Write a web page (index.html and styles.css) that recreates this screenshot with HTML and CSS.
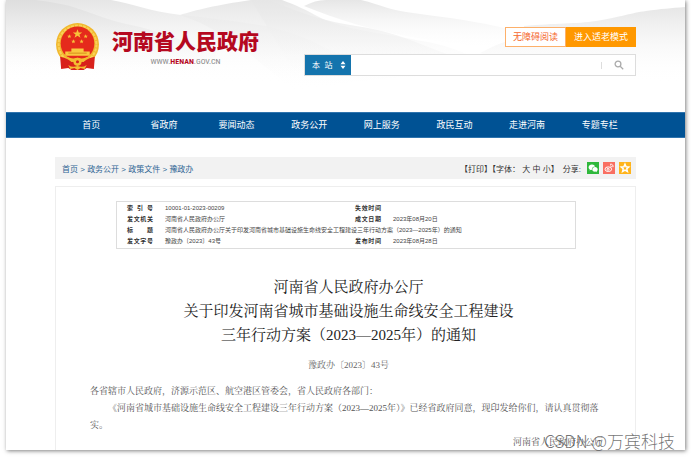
FILE: index.html
```html
<!DOCTYPE html>
<html lang="zh-CN">
<head>
    <meta charset="UTF-8">
    <meta name="viewport" content="width=device-width, initial-scale=1.0">
    <title>河南省人民政府</title>
    <link rel="stylesheet" href="styles.css">
</head>
<body>
    <div class="page">
        <header class="header">
            <svg class="hills" viewBox="0 0 679 112" preserveAspectRatio="none" aria-hidden="true">
                <defs>
                    <linearGradient id="g1" x1="0" y1="0" x2="0" y2="1">
                        <stop offset="0" stop-color="#dedede"/>
                        <stop offset="1" stop-color="#ffffff" stop-opacity="0"/>
                    </linearGradient>
                    <linearGradient id="g2" x1="0" y1="0" x2="0" y2="1">
                        <stop offset="0" stop-color="#e6e6e6"/>
                        <stop offset="1" stop-color="#ffffff" stop-opacity="0"/>
                    </linearGradient>
                </defs>
                <path fill="url(#g2)" d="M245 0H276C290 5 300 10 315 18C340 30 370 32 410 40C450 46 470 58 500 74H290Z"/>
                <path fill="url(#g2)" d="M298 6C306 2 312 0 320 0H355C375 5 385 10 400 12C430 17 460 18 515 32V50C440 44 370 36 298 6Z"/>
                <path fill="url(#g2)" d="M518 26C550 23 570 24 590 21C615 17 625 13 640 11C655 9 665 8 679 7V84C620 78 530 70 474 53C490 45 500 40 518 38Z"/>
                <path fill="url(#g2)" d="M174 15C190 10 210 5 245 0H262C290 10 310 20 350 26C380 30 400 38 430 50C460 62 480 66 520 74C430 72 340 80 290 92C250 60 220 30 174 15Z"/>
                <path fill="url(#g2)" d="M0 0H105C125 3 145 12 175 15C205 18 235 22 260 26C300 36 320 46 360 72C320 84 200 84 0 84Z"/>
                <path fill="url(#g1)" d="M0 0H29C45 2 60 4 73 9C90 14 100 20 125 25C150 30 170 40 210 50V76H0Z"/>
            </svg>
            <a class="logo" href="#">
                <svg class="emblem" viewBox="0 0 44 46" aria-hidden="true">
                    <circle cx="22" cy="21" r="21" fill="#f1b82d"/>
                    <circle cx="22" cy="21" r="18.5" fill="none" stroke="#f9d158" stroke-width="2" stroke-dasharray="3 1"/>
                    <circle cx="22" cy="20" r="16.500" fill="#e52a1c"/>
                    <path fill="#f8c33a" d="M22 6L23.200 9.300H26.600L23.900 11.300L24.900 14.500L22 12.500L19.100 14.500L20.100 11.300L17.400 9.300H20.800Z"/>
                    <path fill="#f8c33a" d="M14 11l.6 1.400h1.500l-1.200 1 .4 1.500-1.300-.9-1.300.9.4-1.500-1.200-1h1.500ZM30 11l.6 1.400h1.500l-1.200 1 .4 1.500-1.300-.9-1.300.9.4-1.500-1.200-1h1.500ZM18 16l.6 1.400h1.500l-1.200 1 .4 1.500-1.300-.9-1.300.9.4-1.500-1.200-1h1.500ZM26 16l.6 1.400h1.500l-1.200 1 .4 1.500-1.300-.9-1.300.9.4-1.500-1.200-1h1.500Z"/>
                    <path fill="#f9c93f" d="M16 25H28V28H34V32H10V28H16Z"/>
                    <path stroke="#d9901e" d="M13 29.500H31" fill="none"/>
                    <path fill="#d8211b" d="M5 33C9 34 13 35 16 38H28C31 35 35 34 39 33L38 45L31 44L28 46H16L13 44L6 45Z"/>
                    <path fill="#f4bd31" d="M12 33C16 35 18 35 22 34C26 35 28 35 32 33L28 38H16Z"/>
                    <circle cx="22" cy="38" r="4" fill="#f4bd31"/>
                    <circle cx="22" cy="38" r="1.500" fill="#d8211b"/>
                    <path fill="#f4bd31" d="M13 41Q17 44 22 42Q27 44 31 41L29 45L25 44L22 46L19 44L15 45Z"/>
                </svg>
                <span class="logo-text">
                    <strong class="logo-name">河南省人民政府</strong>
                    <span class="logo-url">WWW.<b>HENAN</b>.GOV.CN</span>
                </span>
            </a>
            <div class="tools">
                <div class="modes">
                    <button class="mode" type="button">无障碍阅读</button>
                    <button class="mode mode-on" type="button">进入适老模式</button>
                </div>
                <form class="search">
                    <span class="scope">
                        <select class="scope-select" aria-label="搜索范围">
                            <option>本&nbsp; 站</option>
                        </select>
                        <svg class="scope-arrows" viewBox="0 0 6 8" aria-hidden="true"><path fill="#fff" d="M3 0L5.500 3.300H.5ZM3 8L.5 4.700H5.500Z"/></svg>
                    </span>
                    <input class="search-input" type="text" aria-label="搜索">
                    <button class="search-btn" type="submit" aria-label="搜索">
                        <svg viewBox="0 0 10 10" aria-hidden="true"><circle cx="4" cy="4" r="2.900"/><path d="M6.200 6.200L9.200 9.200"/></svg>
                    </button>
                </form>
            </div>
        </header>

        <nav class="nav">
            <a href="#">首页</a>
            <a href="#">省政府</a>
            <a href="#">要闻动态</a>
            <a href="#">政务公开</a>
            <a href="#">网上服务</a>
            <a href="#">政民互动</a>
            <a href="#">走进河南</a>
            <a href="#">专题专栏</a>
        </nav>

        <main class="main">
            <div class="bar">
                <div class="crumbs">
                    <a href="#">首页</a> &gt; <a href="#">政务公开</a> &gt; <a href="#">政策文件</a> &gt; <a href="#">豫政办</a>
                </div>
                <div class="actions">
                    <span>【<a href="#">打印</a>】【字体： <a href="#">大</a> <a href="#">中</a> <a href="#">小</a>】</span>
                    <span class="share-label">分享:</span>
                    <a class="share wechat" href="#" aria-label="微信">
                        <svg viewBox="0 0 12 12" aria-hidden="true"><path fill="#fff" d="M5 2.500C3 2.500 1.600 3.700 1.600 5.200c0 .9.500 1.600 1.200 2.100L2.500 8.500l1.400-.7 1 .2C4.600 6 6 4.600 8.100 4.500 7.700 3.300 6.500 2.500 5 2.500Z"/><path fill="#fff" d="M10.700 7.400c0-1.300-1.200-2.300-2.700-2.300S5.300 6.100 5.300 7.400 6.500 9.700 8 9.700l.8-.1 1.200.7-.3-1c.6-.5 1-1.100 1-1.900Z"/></svg>
                    </a>
                    <a class="share weibo" href="#" aria-label="微博">
                        <svg viewBox="0 0 12 12" aria-hidden="true"><ellipse cx="5.300" cy="7.200" rx="3.300" ry="2.300"/><circle cx="5.100" cy="7.300" r="1"/><path d="M7 2.300C9 1.700 10.600 3.300 9.900 5.200M7.200 4C8.200 3.800 8.700 4.400 8.400 5.200"/></svg>
                    </a>
                    <a class="share qzone" href="#" aria-label="收藏">
                        <svg viewBox="0 0 12 12" aria-hidden="true"><path d="M6 2.200L7.100 4.700L9.800 5L7.800 6.800L8.400 9.500L6 8.100L3.600 9.500L4.200 6.800L2.200 5L4.900 4.700Z"/></svg>
                    </a>
                </div>
            </div>

            <article class="doc">
                <table class="info">
                    <tr>
                        <th scope="row">索 引 号</th>
                        <td>10001-01-2023-00209</td>
                        <th scope="row">失效时间</th>
                        <td></td>
                    </tr>
                    <tr>
                        <th scope="row">发文机关</th>
                        <td>河南省人民政府办公厅</td>
                        <th scope="row">成文日期</th>
                        <td>2023年08月20日</td>
                    </tr>
                    <tr>
                        <th scope="row">标 题</th>
                        <td colspan="3">河南省人民政府办公厅关于印发河南省城市基础设施生命线安全工程建设三年行动方案（2023—2025年）的通知</td>
                    </tr>
                    <tr>
                        <th scope="row">发文字号</th>
                        <td>豫政办〔2023〕43号</td>
                        <th scope="row">发布时间</th>
                        <td>2023年08月28日</td>
                    </tr>
                </table>
                <h1 class="title">河南省人民政府办公厅<br>关于印发河南省城市基础设施生命线安全工程建设<br>三年行动方案（2023—2025年）的通知</h1>
                <p class="number">豫政办〔2023〕43号</p>
                <div class="text">
                    <p>各省辖市人民政府，济源示范区、航空港区管委会，省人民政府各部门：</p>
                    <p class="indent">《河南省城市基础设施生命线安全工程建设三年行动方案（2023—2025年）》已经省政府同意，现印发给你们，请认真贯彻落实。</p>
                    <p class="sign">河南省人民政府办公厅</p>
                </div>
            </article>
        </main>
        <div class="watermark">CSDN @万宾科技</div>
    </div>
</body>
</html>
```
FILE: styles.css
```css
* {
    box-sizing: border-box;
}
body {
    margin: 0;
    padding: 0 6px 10px;
    background: #fff;
    color: #333;
    font-family: "Liberation Sans", "Noto Sans CJK SC", sans-serif;
    font-size: 8px;
}
a {
    color: inherit;
    text-decoration: none;
}
button, input, select {
    margin: 0;
    border: 0;
    border-radius: 0;
    font-family: inherit;
}
.page {
    position: relative;
    background: #fff;
    box-shadow: 1px 1px 4px rgba(0, 0, 0, 0.5);
}

/* header */
.header {
    position: relative;
    display: flex;
    justify-content: space-between;
    height: 112px;
    padding: 0 49px;
}
.hills {
    position: absolute;
    top: 0;
    left: 0;
    width: 100%;
    height: 100%;
}
.logo {
    position: relative;
    display: flex;
    align-items: flex-start;
    gap: 12px;
    padding-top: 23px;
}
.emblem {
    width: 45px;
    height: 47px;
}
.logo-text {
    display: flex;
    flex-direction: column;
    align-items: center;
    padding-top: 6px;
}
.logo-name {
    color: #b5081f;
    font-size: 21px;
    font-weight: 900;
    line-height: 26px;
}
.logo-url {
    color: #888;
    font-family: "Liberation Sans Narrow", "Roboto Condensed", Roboto, sans-serif;
    font-size: 8px;
    line-height: 14px;
}
.logo-url b {
    color: #b5081f;
}
.tools {
    position: relative;
    display: flex;
    flex-direction: column;
    align-items: flex-end;
    gap: 7px;
    width: 332px;
    padding-top: 27px;
}
.modes {
    display: flex;
}
.mode {
    height: 20px;
    padding: 0 7px;
    border: 1px solid #fdb06a;
    background: #fff;
    color: #f5662b;
    font-size: 9px;
    line-height: 18px;
}
.mode-on {
    border-color: #ff9800;
    background: #ff9800;
    color: #fff;
}
.search {
    display: flex;
    align-items: center;
    width: 100%;
    height: 22px;
    border: 1px solid #ddd;
    background: #fff;
}
.scope {
    display: flex;
    align-items: center;
    width: 46px;
    height: 20px;
    padding-right: 5px;
    background: #1474ad;
}
.scope-select {
    flex: 1;
    min-width: 0;
    height: 20px;
    padding: 0 0 0 7px;
    appearance: none;
    background: transparent;
    color: #fff;
    font-size: 8px;
}
.scope-arrows {
    width: 6px;
    height: 8px;
}
.search-input {
    flex: 1;
    min-width: 0;
    height: 20px;
    padding: 0 6px;
    background: transparent;
    font-size: 8px;
}
.search-btn {
    display: flex;
    align-items: center;
    justify-content: center;
    width: 34px;
    height: 7px;
    padding: 0;
    border-left: 1px solid #ddd;
    background: transparent;
}
.search-btn svg {
    flex: none;
    width: 10px;
    height: 10px;
    fill: none;
    stroke: #aaa;
    stroke-width: 1.3;
}

/* navigation */
.nav {
    display: grid;
    grid-template-columns: repeat(8, 1fr);
    height: 26px;
    padding: 0 49px;
    border-top: 1px solid #2f74ae;
    border-bottom: 1px solid #2f74ae;
    background: #005294;
    color: #fff;
    font-size: 9px;
    line-height: 24px;
    text-align: center;
}

.main {
    padding: 19px 49px 0;
}
.bar {
    display: flex;
    align-items: center;
    justify-content: space-between;
    height: 22px;
    padding: 0 5px 0 7px;
    background: #f2f2f2;
}
.crumbs {
    color: #2f6594;
}
.actions {
    display: flex;
    align-items: center;
    gap: 4px;
}
.share {
    width: 12px;
    height: 12px;
}
.share svg {
    display: block;
}
.wechat {
    margin-left: 2px;
    background: #2fb83c;
}
.weibo {
    background: #f96f62;
}
.weibo svg {
    fill: none;
    stroke: #fff;
}
.qzone {
    background: #ffb41c;
}
.qzone svg {
    fill: none;
    stroke: #fff;
    stroke-width: 1.5;
}

/* document */
.doc {
    height: 264px;
    margin-top: 7px;
    padding: 14px 28px 0 34px;
    border: 1px solid #eee;
    border-bottom: 0;
    overflow: hidden;
}
.info {
    width: calc(100% - 57px);
    margin: 0 31px 0 26px;
    padding: 1px 0 1px 10px;
    border: 1px solid #ddd;
    border-spacing: 0;
    table-layout: fixed;
    font-size: 6px;
    line-height: 11px;
}
.info th {
    width: 38px;
    padding: 0 12px 0 0;
    text-align: justify;
    text-align-last: justify;
    white-space: nowrap;
}
.info td {
    padding: 0;
    color: #444;
}
.info td:nth-child(2) {
    width: 190px;
}
.title {
    margin: 26px 0 0;
    color: #222;
    font-family: "Liberation Serif", "Noto Serif CJK SC", "Noto Sans CJK SC", serif;
    font-size: 15px;
    font-weight: normal;
    line-height: 24px;
    text-align: center;
}
.number {
    margin: 10px 0 0;
    color: #666;
    font-family: "Liberation Serif", "Noto Serif CJK SC", "Noto Sans CJK SC", serif;
    font-size: 9px;
    line-height: 16px;
    text-align: center;
}
.text {
    margin-top: 10px;
    color: #555;
    font-family: "Liberation Serif", "Noto Serif CJK SC", "Noto Sans CJK SC", serif;
    font-size: 9px;
    line-height: 17px;
}
.text p {
    margin: 0;
}
.text .indent {
    text-indent: 2em;
}
.text .sign {
    padding-right: 4px;
    text-align: right;
}
.watermark {
    position: absolute;
    right: 10px;
    bottom: -2px;
    color: rgba(70, 70, 70, 0.75);
    font-family: "Noto Sans CJK SC", sans-serif;
    font-size: 17px;
    font-weight: 300;
    line-height: 22px;
}
```
